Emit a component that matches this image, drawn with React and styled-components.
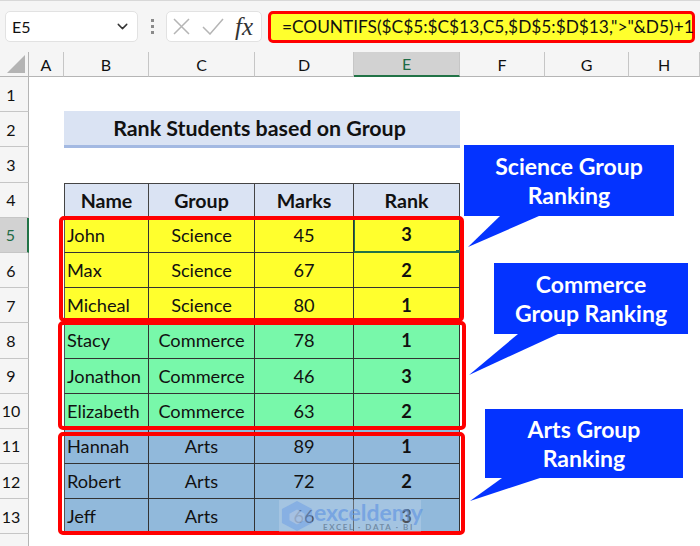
import React from 'react';
import styled, { createGlobalStyle } from 'styled-components';
import { ChevronDown } from 'lucide-react';

const COLUMNS = ['A', 'B', 'C', 'D', 'E', 'F', 'G', 'H'];

const GROUPS = {
  science: '#ffff2d',
  commerce: '#78f8aa',
  arts: '#91b9db',
};

const STUDENTS = [
  { row: 5, name: 'John', group: 'Science', marks: 45, rank: 3, tone: 'science' },
  { row: 6, name: 'Max', group: 'Science', marks: 67, rank: 2, tone: 'science' },
  { row: 7, name: 'Micheal', group: 'Science', marks: 80, rank: 1, tone: 'science' },
  { row: 8, name: 'Stacy', group: 'Commerce', marks: 78, rank: 1, tone: 'commerce' },
  { row: 9, name: 'Jonathon', group: 'Commerce', marks: 46, rank: 3, tone: 'commerce' },
  { row: 10, name: 'Elizabeth', group: 'Commerce', marks: 63, rank: 2, tone: 'commerce' },
  { row: 11, name: 'Hannah', group: 'Arts', marks: 89, rank: 1, tone: 'arts' },
  { row: 12, name: 'Robert', group: 'Arts', marks: 72, rank: 2, tone: 'arts' },
  { row: 13, name: 'Jeff', group: 'Arts', marks: 66, rank: 3, tone: 'arts' },
];

const App = () => (
  <>
    <GlobalStyle />
    <Page>
      <FormulaBar>
        <NameBox>
          E5
          <ChevronDown size={17} strokeWidth={2} color="#333" />
        </NameBox>
        <Grip>
          <i />
          <i />
          <i />
        </Grip>
        <FxBox>
          <svg width="17" height="17" viewBox="0 0 17 17">
            <path d="M1 1l15 15M16 1L1 16" stroke="#b5b5b5" strokeWidth="1.5" fill="none" />
          </svg>
          <svg width="22" height="17" viewBox="0 0 22 17">
            <path d="M1 9l7 7L21 1" stroke="#b5b5b5" strokeWidth="1.5" fill="none" />
          </svg>
          <FxLabel>fx</FxLabel>
        </FxBox>
        <FormulaInput>=COUNTIFS($C$5:$C$13,C5,$D$5:$D$13,"&gt;"&amp;D5)+1</FormulaInput>
      </FormulaBar>

      <Sheet>
        <SheetRow>
          <Corner>
            <svg width="18" height="18" viewBox="0 0 18 18">
              <path d="M18 0v18H0z" fill="#b4b4b4" />
            </svg>
          </Corner>
          {COLUMNS.map(col => (
            <ColHead key={col} $active={col === 'E'}>
              {col}
            </ColHead>
          ))}
        </SheetRow>

        <SheetRow>
          <RowHead>1</RowHead>
        </SheetRow>
        <SheetRow>
          <RowHead>2</RowHead>
          <span />
          <Title>Rank Students based on Group</Title>
        </SheetRow>
        <SheetRow>
          <RowHead>3</RowHead>
        </SheetRow>
        <SheetRow>
          <RowHead>4</RowHead>
          <span />
          <HeadCell>Name</HeadCell>
          <HeadCell>Group</HeadCell>
          <HeadCell>Marks</HeadCell>
          <HeadCell>Rank</HeadCell>
        </SheetRow>
        {STUDENTS.map(s => (
          <SheetRow key={s.row}>
            <RowHead $active={s.row === 5}>{s.row}</RowHead>
            <span />
            <Cell $tone={s.tone} $left>
              {s.name}
            </Cell>
            <Cell $tone={s.tone}>{s.group}</Cell>
            <Cell $tone={s.tone}>{s.marks}</Cell>
            <Cell $tone={s.tone} $bold $selected={s.row === 5}>
              {s.rank}
            </Cell>
          </SheetRow>
        ))}
        <SheetRow>
          <RowHead />
        </SheetRow>

        <GroupBox $left={59} $top={164} $width={405} $height={106} />
        <GroupBox $left={58} $top={269} $width={408} $height={109} />
        <GroupBox $left={58} $top={380} $width={407} $height={103} />

        <Watermark>
          <WatermarkLogo width="36" height="32" viewBox="0 0 36 34">
            <path d="M18 1l16 8.5v15L18 33 2 24.5v-15z" fill="rgba(105,155,230,0.5)" />
            <path d="M18 10l8 4.5v7L18 26l-8-4.5v-7z" fill="rgba(190,205,225,0.55)" />
          </WatermarkLogo>
          <WatermarkText>
            <WatermarkName>exceldemy</WatermarkName>
            <WatermarkTag>EXCEL · DATA · BI</WatermarkTag>
          </WatermarkText>
        </Watermark>
      </Sheet>

      <Callout $x={464} $y={145} $w={210} $h={71}>
        Science Group
        <br />
        Ranking
        <Tail width="80" height="32" viewBox="0 0 80 32" $left={0}>
          <path d="M36 0L4 31 75 0z" fill="#0433ff" />
        </Tail>
      </Callout>
      <Callout $x={494} $y={263} $w={194} $h={71}>
        Commerce
        <br />
        Group Ranking
        <Tail width="92" height="42" viewBox="0 0 92 42" $left={-26}>
          <path d="M50 0L1 41 90 0z" fill="#0433ff" />
        </Tail>
      </Callout>
      <Callout $x={485} $y={409} $w={198} $h={69}>
        Arts Group
        <br />
        Ranking
        <Tail width="92" height="24" viewBox="0 0 92 24" $left={-16}>
          <path d="M33 0L1 23 71 0z" fill="#0433ff" />
        </Tail>
      </Callout>
    </Page>
  </>
);

export default App;

const FONT = `Lato, 'Open Sans', sans-serif`;

const GlobalStyle = createGlobalStyle`
  html, body {
    margin: 0;
    padding: 0;
    background: #fff;
  }
`;

const Page = styled.div`
  position: relative;
  width: 700px;
  height: 546px;
  overflow: hidden;
  background: #f5f5f5;
  font-family: ${FONT};
  color: #111;
`;

// 수식 입력줄
const FormulaBar = styled.div`
  display: flex;
  align-items: center;
  height: 52px;
  padding: 0 5px;
  box-sizing: border-box;
  border-top: 1px solid #d8d8d8;
`;

const NameBox = styled.div`
  display: flex;
  align-items: center;
  justify-content: space-between;
  width: 133px;
  height: 31px;
  box-sizing: border-box;
  padding: 0 6px;
  background: #fff;
  border: 1px solid #e2e2e2;
  border-radius: 5px;
  font-size: 16px;
`;

const Grip = styled.div`
  display: flex;
  flex-direction: column;
  gap: 3px;
  width: 28px;
  align-items: center;

  i {
    width: 3px;
    height: 3px;
    background: #8a8a8a;
  }
`;

const FxBox = styled.div`
  display: flex;
  align-items: center;
  gap: 12px;
  width: 96px;
  height: 31px;
  box-sizing: border-box;
  padding: 0 0 0 6px;
  background: #fff;
  border: 1px solid #e2e2e2;
  border-radius: 5px;
`;

const FxLabel = styled.span`
  font-family: 'Liberation Serif', serif;
  font-style: italic;
  font-size: 25px;
  line-height: 25px;
  color: #333;
  margin-left: -1px;
`;

const FormulaInput = styled.div`
  display: flex;
  align-items: center;
  width: 427px;
  height: 32px;
  margin-left: 6px;
  box-sizing: border-box;
  padding-left: 11px;
  background: #ffff2d;
  border: 3px solid #ff0000;
  border-radius: 5px;
  font-size: 17.3px;
  white-space: nowrap;
`;

// 시트 영역
const Sheet = styled.div`
  position: relative;
  background: #fff;
`;

const SheetRow = styled.div`
  display: grid;
  grid-template-columns: 29px 35px 85px 106px 99px 106px 85px 84px 71px;
  height: 35.2px;

  &:first-child {
    height: 25px;
    background: #f5f5f5;
  }
`;

const Corner = styled.div`
  display: flex;
  align-items: flex-end;
  justify-content: flex-end;
  padding: 0 3px 3px 0;
  box-sizing: border-box;
  border-bottom: 1px solid #b5b5b5;
  border-right: 1px solid #b5b5b5;
`;

const ColHead = styled.div`
  display: flex;
  align-items: center;
  justify-content: center;
  box-sizing: border-box;
  font-size: 16px;
  border-right: 1px solid #c6c6c6;
  border-bottom: ${p => (p.$active ? '2px solid #217346' : '1px solid #b5b5b5')};
  background: ${p => (p.$active ? '#d2d2d2' : 'transparent')};
  color: ${p => (p.$active ? '#1f6b46' : '#111')};
`;

const RowHead = styled.div`
  display: flex;
  align-items: center;
  justify-content: center;
  box-sizing: border-box;
  padding-right: 6px;
  font-size: 16px;
  background: ${p => (p.$active ? '#d2d2d2' : '#f5f5f5')};
  color: ${p => (p.$active ? '#1f6b46' : '#111')};
  border-bottom: 1px solid #c6c6c6;
  border-right: ${p => (p.$active ? '2px solid #217346' : '1px solid #b5b5b5')};
`;

const Title = styled.div`
  grid-column: span 4;
  display: flex;
  align-items: center;
  justify-content: center;
  box-sizing: border-box;
  margin: -1px 0;
  padding: 0 5px 1px 0;
  background: #dae3f3;
  border-bottom: 3px solid #a3b9e2;
  font-size: 21.4px;
  font-weight: 700;
`;

const HeadCell = styled.div`
  display: flex;
  align-items: center;
  justify-content: center;
  box-sizing: border-box;
  background: #dae3f3;
  border-top: 1px solid #444;
  border-right: 1px solid #444;
  border-bottom: 1px solid #444;
  font-size: 19.6px;
  font-weight: 700;

  &:nth-child(3) {
    border-left: 1px solid #444;
  }
`;

const Cell = styled.div`
  position: relative;
  display: flex;
  align-items: center;
  justify-content: ${p => (p.$left ? 'flex-start' : 'center')};
  box-sizing: border-box;
  padding-left: ${p => (p.$left ? '2px' : '0')};
  background: ${p => GROUPS[p.$tone]};
  border-right: 1px solid #333;
  border-bottom: ${p => (p.$selected ? '2px solid #217346' : '1px solid #333')};
  font-size: 18.2px;
  font-weight: ${p => (p.$bold ? 700 : 400)};

  &:nth-child(3) {
    border-left: 1px solid #555;
  }

  ${p =>
    p.$selected &&
    `
    box-shadow: inset 1px 0 0 #217346;

    &::after {
      content: '';
      position: absolute;
      right: -1px;
      bottom: -3px;
      width: 4px;
      height: 4px;
      background: #217346;
    }
  `}
`;

const GroupBox = styled.div`
  position: absolute;
  left: ${p => p.$left}px;
  top: ${p => p.$top}px;
  width: ${p => p.$width}px;
  height: ${p => p.$height}px;
  box-sizing: border-box;
  border: 4px solid #ff0000;
  border-radius: 5px;
  pointer-events: none;
`;

const Watermark = styled.div`
  position: absolute;
  left: 279px;
  top: 448px;
  display: flex;
  align-items: center;
  width: 142px;
  height: 32px;
  background: rgba(205, 222, 240, 0.32);
`;

const WatermarkLogo = styled.svg`
  flex: none;
`;

const WatermarkText = styled.div`
  display: flex;
  flex-direction: column;
  align-items: center;
  margin-left: -1px;
  line-height: 1;
`;

const WatermarkName = styled.span`
  font-size: 23px;
  font-weight: 700;
  color: rgba(90, 145, 225, 0.62);
  line-height: 21px;
`;

const WatermarkTag = styled.span`
  font-size: 8px;
  font-weight: 700;
  letter-spacing: 1.6px;
  color: rgba(100, 125, 150, 0.8);
`;

// 말풍선
const Callout = styled.div`
  position: absolute;
  left: ${p => p.$x}px;
  top: ${p => p.$y}px;
  width: ${p => p.$w}px;
  height: ${p => p.$h}px;
  display: flex;
  align-items: center;
  justify-content: center;
  text-align: center;
  background: #0433ff;
  color: #fff;
  font-size: 23px;
  font-weight: 700;
  line-height: 29px;
`;

const Tail = styled.svg`
  position: absolute;
  top: 100%;
  left: ${p => p.$left}px;
`;
